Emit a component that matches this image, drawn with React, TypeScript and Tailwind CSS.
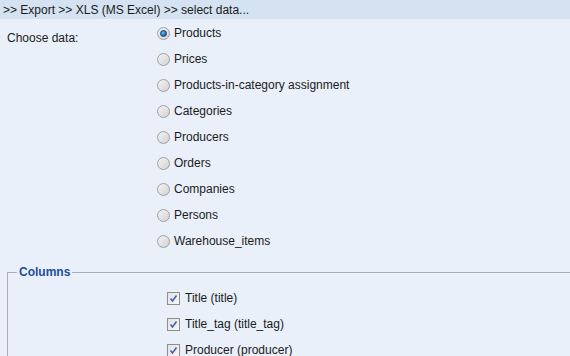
import React from "react";

const dataTypes = [
  "Products",
  "Prices",
  "Products-in-category assignment",
  "Categories",
  "Producers",
  "Orders",
  "Companies",
  "Persons",
  "Warehouse_items",
];

const columns = ["Title (title)", "Title_tag (title_tag)", "Producer (producer)"];

const Radio = ({ checked }: { checked: boolean }) => (
  <span className="flex h-[13px] w-[13px] items-center justify-center rounded-full border border-[#a0a0a0] bg-gradient-to-br from-[#f4f4f4] to-[#d2d2d2]">
    {checked && (
      <span className="h-[7px] w-[7px] rounded-full border border-[#0c3f77] bg-[radial-gradient(circle_at_40%_35%,#6ab8f0,#1667b5_70%)]" />
    )}
  </span>
);

const Checkbox = () => (
  <span className="flex h-[13px] w-[13px] items-center justify-center border border-[#8f8f8f] bg-gradient-to-br from-[#e2e2e2] to-[#f7f7f7]">
    <svg width="9" height="9" viewBox="0 0 9 9">
      <path d="M1.5 4.5 L3.5 7 L7.5 1.5" fill="none" stroke="#4b5fa8" strokeWidth="1.6" />
    </svg>
  </span>
);

function App() {
  return (
    <div className="h-[356px] w-[570px] overflow-hidden bg-[#e9f0fa] text-[12px] text-[#1b1b1b] [font-family:'Liberation_Sans',Arial,sans-serif]">
      <div className="flex h-[19px] items-center bg-[#d5e2f2] px-[3px]">
        &gt;&gt; Export &gt;&gt; XLS (MS Excel) &gt;&gt; select data...
      </div>

      <div className="flex pt-px">
        <div className="w-[157px] shrink-0 pl-[7px] pt-[9px]">Choose data:</div>
        <div className="flex flex-col">
          {dataTypes.map((name, i) => (
            <label key={name} className="flex h-[26px] items-center gap-[4px]">
              <Radio checked={i === 0} />
              <span>{name}</span>
            </label>
          ))}
        </div>
      </div>

      <fieldset className="ml-[7px] mt-[9px] w-[600px] border border-[#a9adbf] pb-2">
        <legend className="ml-[9px] px-[2px] font-bold text-[#1c4e9e]">Columns</legend>
        <div className="flex flex-col pl-[159px] pt-[4px]">
          {columns.map((c) => (
            <label key={c} className="flex h-[26px] items-center gap-[5px]">
              <Checkbox />
              <span>{c}</span>
            </label>
          ))}
        </div>
      </fieldset>
    </div>
  );
}

export default App;
